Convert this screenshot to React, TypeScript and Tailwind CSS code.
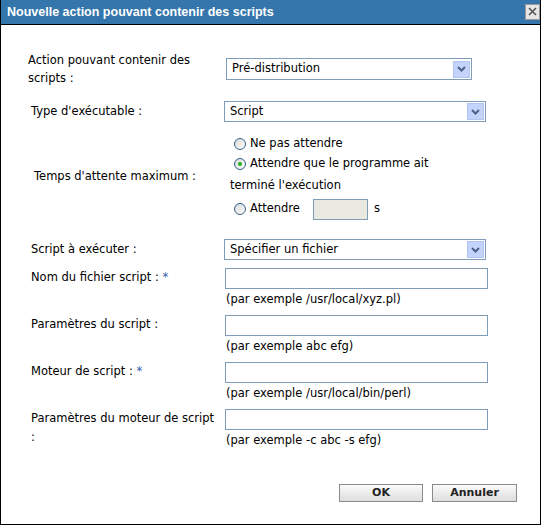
const font = { fontFamily: '"DejaVu Sans", Verdana, sans-serif' };

const Arrow = () => (
    <div className="w-[17px] h-[17px] mr-[1px] flex items-center justify-center bg-[#c3d3fb] border border-[#b2c5f0]">
        <svg width="9" height="6" viewBox="0 0 9 6">
            <path d="M1 1 L4.5 4.5 L8 1" stroke="#4d6185" strokeWidth="2" fill="none" />
        </svg>
    </div>
);

const Select = ({ value, className }: { value: string; className: string }) => (
    <div
        className={`h-[21px] border border-[#7f9db9] bg-white flex items-center justify-between pl-[5px] ${className}`}
    >
        <span>{value}</span>
        <Arrow />
    </div>
);

const Radio = ({ checked }: { checked?: boolean }) => (
    <div className="w-[12px] h-[12px] rounded-full border border-[#3a5f8a] bg-gradient-to-br from-[#d8d8d8] to-[#ffffff] flex items-center justify-center mr-[4px] shrink-0">
        {checked && <div className="w-[4px] h-[4px] rounded-full bg-[#22b022]" />}
    </div>
);

const Star = () => <span className="text-[#2f63a8]"> *</span>;

const Field = ({
    label,
    hint,
    first,
}: {
    label: React.ReactNode;
    hint: string;
    first?: boolean;
}) => (
    <div className={`flex items-start ${first ? "mt-[8px]" : "mt-[6px]"}`}>
        <div className="w-[196px] pl-[3px] leading-[19px]">{label}</div>
        <div className="ml-[1px]">
            <div className="w-[263px] h-[21px] border border-[#7f9db9] bg-white" />
            <div className="leading-[20px] pl-[1px]">{hint}</div>
        </div>
    </div>
);

export default function App() {
    return (
        <div className="w-[543px] h-[526px] bg-white text-black text-[11.5px]" style={font}>
            <div className="w-[541px] h-[525px] border-l border-r border-b border-black flex flex-col">
                <div className="h-[25px] bg-[#3475ab] border-b border-black flex items-center justify-between pl-[6px]">
                    <span className="text-white font-bold text-[12.5px] leading-[24px] font-['Liberation_Sans',Arial,sans-serif]">
                        Nouvelle action pouvant contenir des scripts
                    </span>
                    <div className="w-[15px] h-[16px] mb-[1px] bg-[#e6e6e6] border border-[#9a9a9a] flex items-center justify-center">
                        <svg width="9" height="9" viewBox="0 0 9 9">
                            <path d="M1 1 L8 8 M8 1 L1 8" stroke="#555" strokeWidth="1.6" />
                        </svg>
                    </div>
                </div>

                <div className="flex flex-col pl-[27px]">
                    <div className="flex items-start mt-[26px]">
                        <div className="w-[196px] leading-[18px]">
                            Action pouvant contenir des
                            <br />
                            scripts :
                        </div>
                        <Select value="Pré-distribution" className="mt-[7px] ml-[2px] w-[246px] h-[22px]" />
                    </div>

                    <div className="flex items-center mt-[14px]">
                        <div className="w-[196px] pl-[3px]">Type d'exécutable :</div>
                        <Select value="Script" className="w-[262px]" />
                    </div>

                    <div className="flex items-center mt-[12px]">
                        <div className="w-[196px] pl-[6px]">Temps d'attente maximum :</div>
                        <div className="flex flex-col">
                            <div className="h-[20px] flex items-center pl-[10px]">
                                <Radio />
                                <span>Ne pas attendre</span>
                            </div>
                            <div className="h-[20px] flex items-center pl-[10px]">
                                <Radio checked />
                                <span>Attendre que le programme ait</span>
                            </div>
                            <div className="leading-[22px] pl-[6px]">terminé l'exécution</div>
                            <div className="h-[22px] mt-[2px] flex items-center pl-[10px]">
                                <Radio />
                                <span className="w-[63px]">Attendre</span>
                                <div className="w-[55px] h-[21px] border border-[#7f9db9] bg-[#e9e9e2]" />
                                <span className="ml-[6px]">s</span>
                            </div>
                        </div>
                    </div>

                    <div className="flex items-center mt-[19px]">
                        <div className="w-[196px] pl-[3px]">Script à exécuter :</div>
                        <Select value="Spécifier un fichier" className="w-[262px]" />
                    </div>

                    <Field
                        first
                        label={
                            <>
                                Nom du fichier script :<Star />
                            </>
                        }
                        hint="(par exemple /usr/local/xyz.pl)"
                    />
                    <Field label="Paramètres du script :" hint="(par exemple abc efg)" />
                    <Field
                        label={
                            <>
                                Moteur de script :<Star />
                            </>
                        }
                        hint="(par exemple /usr/local/bin/perl)"
                    />
                    <Field
                        label={
                            <>
                                Paramètres du moteur de script
                                <br />:
                            </>
                        }
                        hint="(par exemple -c abc -s efg)"
                    />

                    <div className="flex justify-end gap-[9px] mt-[34px] pr-[23px]">
                        <button className="w-[84px] h-[18px] border border-[#8a8a8a] bg-gradient-to-b from-[#fafafa] to-[#dedede] font-bold text-[11px] leading-[16px] text-[#222]">
                            OK
                        </button>
                        <button className="w-[85px] h-[18px] border border-[#8a8a8a] bg-gradient-to-b from-[#fafafa] to-[#dedede] font-bold text-[11px] leading-[16px] text-[#222]">
                            Annuler
                        </button>
                    </div>
                </div>
            </div>
        </div>
    );
}
